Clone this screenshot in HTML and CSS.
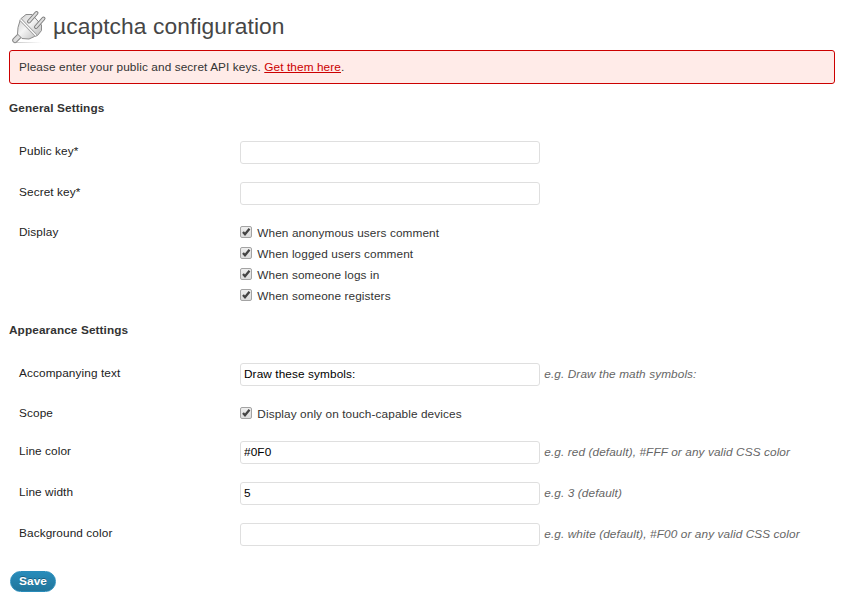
FILE: index.html
```
<!DOCTYPE html>
<html lang="en">
<head>
<meta charset="utf-8">
<title>µcaptcha configuration</title>
<link rel="stylesheet" href="styles.css">
</head>
<body>
<main class="wrap">
  <header class="heading">
    <svg class="plug" width="36" height="36" viewBox="0 0 36 36" fill="none">
      <defs>
        <linearGradient id="metal" x1="0" y1="0" x2="1" y2="1"><stop offset="0" stop-color="#ccc"/><stop offset=".45" stop-color="#f4f4f4"/><stop offset="1" stop-color="#b4b4b4"/></linearGradient>
        <linearGradient id="shade"><stop offset="0" stop-color="#bbb"/><stop offset="1" stop-color="#fff"/></linearGradient>
      </defs>
      <path d="M5 33h26v.8H5z" fill="url(#shade)"/>
      <path d="M4 31.300l4.500-4.500" stroke="#888" stroke-width="5.600" stroke-linecap="round"/>
      <path d="M4 31.300l4.500-4.500" stroke="#ddd" stroke-width="3.600" stroke-linecap="round"/>
      <path d="M9.500 10l5.500-4.500h6l9.500 10.500v5.500l-4 5-3 1-5.500 2.500-7-.5-4.500-4.500.5-6.500z" fill="url(#metal)" stroke="#8c8c8c" stroke-linejoin="round"/>
      <path d="M9.500 10.500l15.500 16" stroke="#999" stroke-width="3"/>
      <path d="M9.500 10.500l15.500 16" stroke="#fff" stroke-width="1.300"/>
      <path d="M18 12.500l7.500-8.500M25 18l7.500-8.500" stroke="#7d7d7d" stroke-width="4" stroke-linecap="round"/>
      <path d="M18 12.500l7.500-8.500M25 18l7.500-8.500" stroke="#ddd" stroke-width="2" stroke-linecap="round"/>
    </svg>
    <h1>µcaptcha configuration</h1>
  </header>
  <div class="notice">Please enter your public and secret API keys. <a href="#">Get them here</a>.</div>
  <form>
    <h2>General Settings</h2>
    <section class="fields">
      <div class="row"><label for="pub">Public key*</label><input id="pub" class="text" type="text"></div>
      <div class="row"><label for="sec">Secret key*</label><input id="sec" class="text" type="text"></div>
      <div class="row display"><span class="label">Display</span>
        <div class="checks">
          <label class="check"><span class="box"><svg viewBox="0 0 12 12"><path d="M3 6L5 8.300 9.500 2.800"/></svg></span>When anonymous users comment</label>
          <label class="check"><span class="box"><svg viewBox="0 0 12 12"><path d="M3 6L5 8.300 9.500 2.800"/></svg></span>When logged users comment</label>
          <label class="check"><span class="box"><svg viewBox="0 0 12 12"><path d="M3 6L5 8.300 9.500 2.800"/></svg></span>When someone logs in</label>
          <label class="check"><span class="box"><svg viewBox="0 0 12 12"><path d="M3 6L5 8.300 9.500 2.800"/></svg></span>When someone registers</label>
        </div>
      </div>
    </section>
    <h2>Appearance Settings</h2>
    <section class="fields">
      <div class="row"><label for="acc">Accompanying text</label><input id="acc" class="text" type="text" value="Draw these symbols:"><em>e.g. Draw the math symbols:</em></div>
      <div class="row scope"><span class="label">Scope</span>
        <div class="checks"><label class="check"><span class="box"><svg viewBox="0 0 12 12"><path d="M3 6L5 8.300 9.500 2.800"/></svg></span>Display only on touch-capable devices</label></div>
      </div>
      <div class="row"><label for="col">Line color</label><input id="col" class="text" type="text" value="#0F0"><em>e.g. red (default), #FFF or any valid CSS color</em></div>
      <div class="row"><label for="wid">Line width</label><input id="wid" class="text" type="text" value="5"><em>e.g. 3 (default)</em></div>
      <div class="row"><label for="bg">Background color</label><input id="bg" class="text" type="text"><em>e.g. white (default), #F00 or any valid CSS color</em></div>
    </section>
    <button class="save" type="button">Save</button>
  </form>
</main>
</body>
</html>
```
FILE: styles.css
```
* { box-sizing: border-box; }
body { margin: 0; background: #fff; color: #333; font: 11.8px/17px "Liberation Sans", Arial, sans-serif; letter-spacing: .1px; }
.wrap { padding: 0 9px; }
.heading { display: flex; height: 50px; padding: 9px 0 0 2px; }
.plug { flex: none; }
h1 { margin: 0 0 0 6px; font-size: 22.8px; line-height: 35px; font-weight: 400; letter-spacing: .08px; color: #464646; white-space: nowrap; }
.notice { height: 34px; padding: 8px 9px; border: 1px solid #c00; border-radius: 3px; background: #ffebe8; }
.notice a { color: #c00; }
h2 { margin: 0; padding: 16px 0 15px; height: 48px; font-size: 11.8px; line-height: 17px; font-weight: 700; }
.row { display: grid; grid-template-columns: 221px 300px auto; height: 41px; padding: 9px 0 0 10px; align-items: start; }
.row > label, .row > .label { color: #222; margin-top: 2px; }
.row em { margin: 3px 0 0 4.300px; color: #666; white-space: nowrap; }
.text { width: 300px; height: 23px; margin: 0; padding: 2px 3px 4px; border: 1px solid #dfdfdf; border-radius: 3px; background: #fff; color: #000; font: inherit; letter-spacing: inherit; line-height: 15px; }
.row.display { height: 92px; padding-top: 8px; }
.row.scope { height: 37px; padding-top: 8px; }
.checks { display: grid; grid-auto-rows: 21px; padding-top: 1px; }
.check { display: flex; align-items: center; gap: 5.300px; height: 20px; white-space: nowrap; }
.box { flex: none; width: 12px; height: 12px; margin-top: -2px; border: 1px solid #a3a3a3; border-radius: 2px; background: linear-gradient(#eee, #dcdcdc); }
.box svg { display: block; width: 12px; height: 12px; margin: -1px; fill: none; stroke: #444; stroke-width: 2.3; }
.save { display: block; width: 46px; height: 21px; margin: 16px 0 0 1px; padding: 0; border: 1px solid #298cba; border-radius: 11px; background: linear-gradient(#298cba, #21759b); color: #fff; font: bold 11.8px/17px "Liberation Sans", Arial, sans-serif; letter-spacing: inherit; text-shadow: 0 -1px 0 rgba(0, 0, 0, .3); }
```
